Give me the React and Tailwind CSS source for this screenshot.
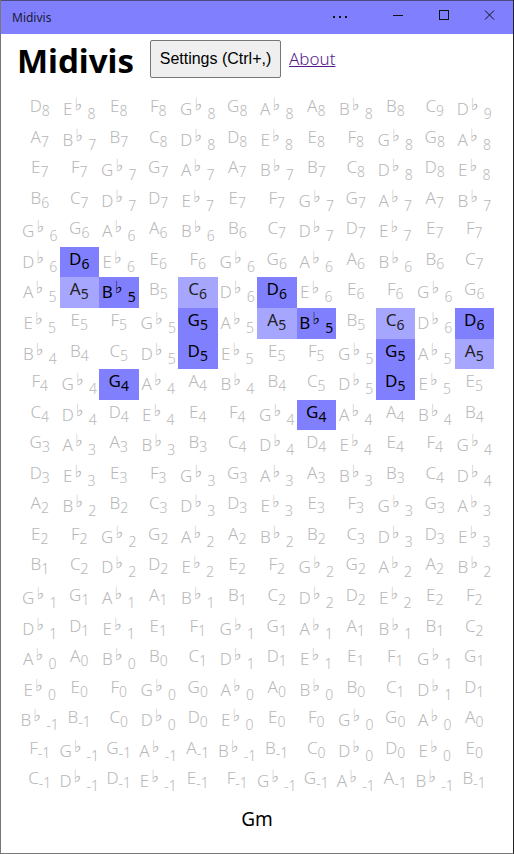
const NAMES = ['C', 'D♭', 'D', 'E♭', 'E', 'F', 'G♭', 'G', 'A♭', 'A', 'B♭', 'B'];
const TOP_NOTE = 110;
const HELD = [86, 82, 79, 74, 67];
const SUSTAINED = [84, 81];

function Note({ note }) {
  const name = NAMES[note % 12];
  const octave = Math.floor(note / 12) - 1;
  const tone = HELD.includes(note)
    ? 'bg-[#8080ff] text-black font-normal'
    : SUSTAINED.includes(note)
      ? 'bg-[#a6a6ff] text-[#222] font-normal'
      : 'text-[#b8b8b8] font-light';
  const flat = name.length > 1;
  return (
    <div className={`flex justify-center overflow-visible whitespace-nowrap ${tone}`}>
      <span className={`text-[17px] leading-[24px] ${flat ? 'pt-[3px]' : ''}`}>{name[0]}</span>
      {flat && (
        <span className="w-[15px] pl-[2px] text-left font-['DejaVu_Sans',sans-serif] text-[17px] font-normal leading-[20px]">♭</span>
      )}
      <span className={`text-[14px] leading-[24px] ${flat ? 'pt-[8px]' : 'pt-[5px]'}`}>{octave}</span>
    </div>
  );
}

function TitleBar() {
  return (
    <header className="flex h-[34px] items-center border-t border-[#4b4b80] bg-[#8080ff] pl-[11px] text-[#1a1a33]">
      <span className="text-[12px] leading-4">Midivis</span>
      <svg className="mb-[4px] ml-auto mr-[13px]" width="168" height="16" fill="none" stroke="#111" shapeRendering="crispEdges">
        <path d="M1 9h2M7 9h2M13 9h2" strokeWidth="2" />
        <path d="M61 7.500h10M107.500 2.500h9v9h-9z" />
        <path d="M153 2.500l9 9M162 2.500l-9 9" shapeRendering="auto" />
      </svg>
    </header>
  );
}

export default function App() {
  const notes = [];
  for (let row = 0; row < 23; row++) {
    for (let col = 0; col < 12; col++) notes.push(TOP_NOTE - row * 5 + col);
  }
  return (
    <div className="flex h-[854px] w-[514px] flex-col overflow-hidden border-x border-b border-l-[#777] border-r-[#222] border-b-[#777] bg-white font-['Noto_Sans',sans-serif] text-black">
      <TitleBar />
      <div className="flex h-[60px] shrink-0 items-start pl-[16px] pt-[6px]">
        <h1 className="w-[133px] whitespace-nowrap text-[33px] font-bold leading-[42px]">Midivis</h1>
        <button className="h-[38px] w-[131px] whitespace-nowrap rounded-[2px] border border-[#767676] bg-[#efefef] font-['Liberation_Sans',sans-serif] text-[16px]">
          Settings (Ctrl+,)
        </button>
        <a href="#about" className="ml-[8px] mt-[7px] text-[17px] font-light leading-[24px] text-[#551a8b] underline">About</a>
      </div>
      <main className="ml-[19px] grid h-[703px] w-[474px] shrink-0 grid-cols-12 grid-rows-[repeat(23,minmax(0,1fr))]">
        {notes.map((note, i) => <Note key={i} note={note} />)}
      </main>
      <p className="pt-[9px] text-center text-[19px] font-normal leading-[26px]">Gm</p>
    </div>
  );
}
